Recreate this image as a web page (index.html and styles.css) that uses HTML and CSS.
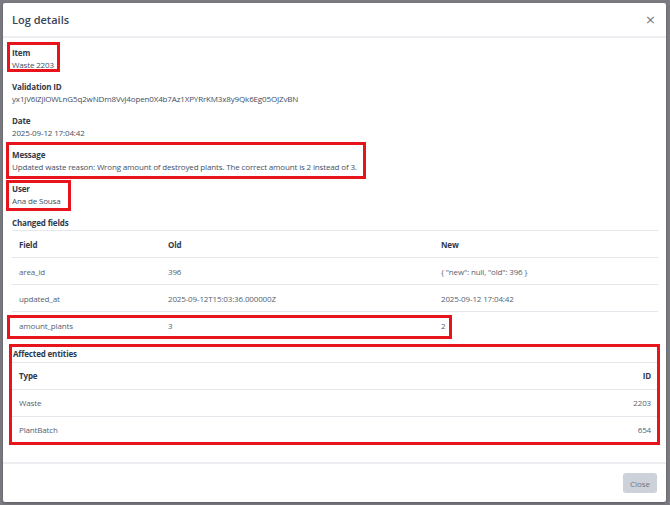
FILE: index.html
```html
<!DOCTYPE html>
<html lang="en">

<head>
  <meta charset="UTF-8" />
  <meta name="viewport" content="width=device-width, initial-scale=1.0" />
  <title>Log details</title>
  <link rel="stylesheet" href="styles.css">
</head>

<body>
  <div class="backdrop">
    <div class="modal">
      <div class="modal-header">
        <h5>Log details</h5>
        <button class="btn-x">&times;</button>
      </div>

      <div class="modal-body">
        <div class="field">
          <div class="label">Item</div>
          <div class="value">Waste 2203</div>
        </div>
        <div class="field">
          <div class="label">Validation ID</div>
          <div class="value">yx1jV6lZjlOWLnG5q2wNDm8VvJ4open0X4b7Az1XPYRrKM3x8y9Qk6Eg05OJZvBN</div>
        </div>
        <div class="field">
          <div class="label">Date</div>
          <div class="value">2025-09-12 17:04:42</div>
        </div>
        <div class="field">
          <div class="label">Message</div>
          <div class="value">Updated waste reason: Wrong amount of destroyed plants. The correct amount is 2 instead of 3.</div>
        </div>
        <div class="field">
          <div class="label">User</div>
          <div class="value">Ana de Sousa</div>
        </div>
        <div class="label">Changed fields</div>
        <table class="log-table changes">
          <thead>
            <tr>
              <th>Field</th>
              <th>Old</th>
              <th>New</th>
            </tr>
          </thead>
          <tbody>
            <tr>
              <td>area_id</td>
              <td>396</td>
              <td>{ "new": null, "old": 396 }</td>
            </tr>
            <tr>
              <td>updated_at</td>
              <td>2025-09-12T15:03:36.000000Z</td>
              <td>2025-09-12 17:04:42</td>
            </tr>
            <tr>
              <td>amount_plants</td>
              <td>3</td>
              <td>2</td>
            </tr>
          </tbody>
        </table>
        <div class="label entities-title">Affected entities</div>
        <table class="log-table entities">
          <thead>
            <tr>
              <th>Type</th>
              <th class="num">ID</th>
            </tr>
          </thead>
          <tbody>
            <tr>
              <td>Waste</td>
              <td class="num">2203</td>
            </tr>
            <tr>
              <td>PlantBatch</td>
              <td class="num">654</td>
            </tr>
          </tbody>
        </table>
      </div>

      <div class="modal-footer">
        <button class="btn-close">Close</button>
      </div>

      <!-- review marks drawn over the dialog -->
      <div class="mark mark-item"></div>
      <div class="mark mark-message"></div>
      <div class="mark mark-user"></div>
      <div class="mark mark-row"></div>
      <div class="mark mark-entities"></div>
    </div>
  </div>
</body>

</html>
```

FILE: styles.css
```css
* {
  box-sizing: border-box;
}

body {
  margin: 0;
  font-family: "Open Sans", "Noto Sans", sans-serif;
  color: #2f3a4c;
  letter-spacing: -0.15px;
}

.backdrop {
  width: 670px;
  height: 505px;
  background: #7b7b82;
  padding: 3px 4px 3px 3px;
}

.modal {
  position: relative;
  background: #fff;
  height: 499px;
  border-radius: 2px;
  display: flex;
  flex-direction: column;
  box-shadow: 0 1px 3px rgba(0, 0, 0, 0.3);
}

.modal-header {
  height: 35px;
  padding: 0 10px 0 9px;
  display: flex;
  align-items: center;
  justify-content: space-between;
  border-bottom: 2px solid #eceef2;
}

.modal-header h5 {
  margin: 0;
  font-size: 11px;
  font-weight: 600;
  color: #3a4556;
  letter-spacing: 0;
}

.btn-x {
  appearance: none;
  border: none;
  background: none;
  padding: 0;
  font-size: 13px;
  line-height: 1;
  color: #777;
  font-family: "DejaVu Sans", sans-serif;
}

.modal-body {
  flex: 1;
  padding: 9px 8px 0 9px;
}

.field {
  margin-bottom: 10px;
}

.label {
  font-size: 8px;
  line-height: 12px;
  font-weight: 700;
  color: #2f3a4c;
}

.value {
  font-size: 8px;
  line-height: 12px;
  color: #444f61;
}

.log-table {
  width: 100%;
  border-collapse: collapse;
  font-size: 8px;
  margin-top: 1px;
}

.log-table th,
.log-table td {
  height: 27px;
  padding: 0 7px;
  text-align: left;
  border-top: 1px solid #e4e7ec;
}

.log-table th {
  font-weight: 700;
  color: #2f3a4c;
}

.log-table td {
  color: #555f70;
}

.changes th:nth-child(1) {
  width: 149px;
}

.changes th:nth-child(2) {
  width: 273px;
}

.log-table .num {
  text-align: right;
}

.entities-title {
  margin-top: 9px;
  margin-left: 1px;
}

.entities {
  margin-top: 2px;
}

.modal-footer {
  height: 40px;
  border-top: 2px solid #eceef2;
  display: flex;
  align-items: center;
  justify-content: flex-end;
  padding: 0 9px;
}

.btn-close {
  appearance: none;
  border: none;
  width: 34px;
  height: 20px;
  border-radius: 3px;
  background: #cdd2da;
  color: #6b7380;
  font-family: inherit;
  font-size: 8px;
  padding: 0;
}

.mark {
  position: absolute;
  border: 3px solid #e8141c;
}

.mark-item {
  left: 4px;
  top: 39px;
  width: 53px;
  height: 30px;
}

.mark-message {
  left: 3px;
  top: 139px;
  width: 360px;
  height: 37px;
}

.mark-user {
  left: 3px;
  top: 177px;
  width: 65px;
  height: 31px;
}

.mark-row {
  left: 4px;
  top: 312px;
  width: 445px;
  height: 24px;
}

.mark-entities {
  left: 6px;
  top: 341px;
  width: 651px;
  height: 101px;
}
```
